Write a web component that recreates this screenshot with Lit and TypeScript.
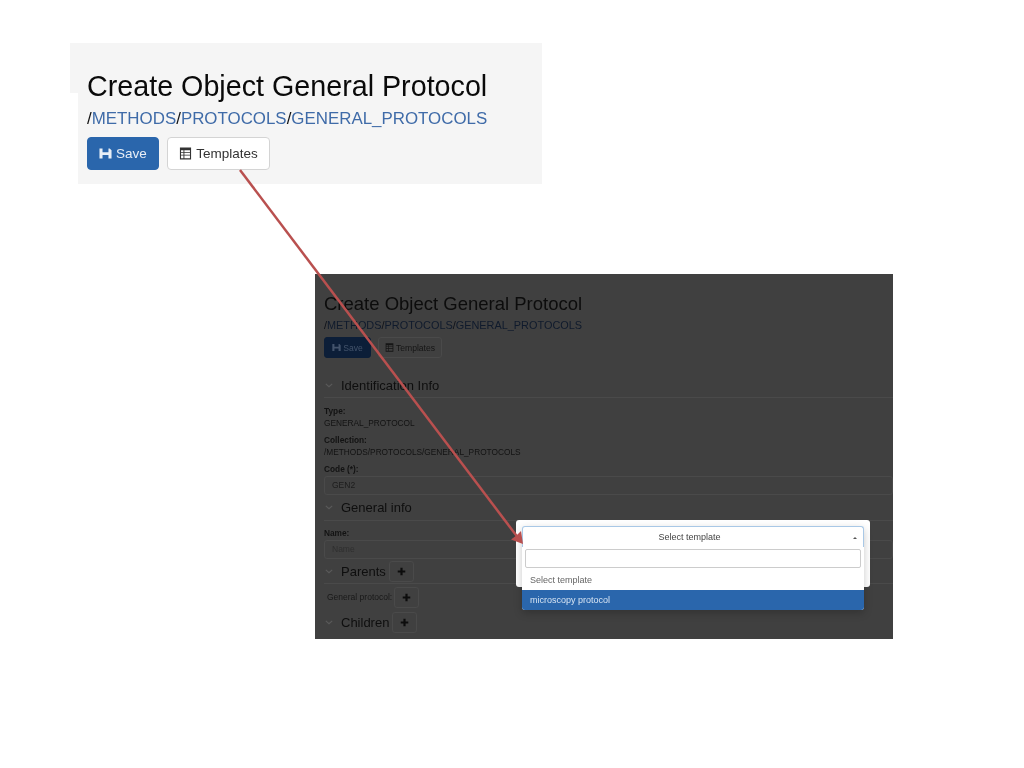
import { LitElement, html, css, svg } from "lit";
import { customElement } from "lit/decorators.js";

const saveIcon = html`<svg class="ico" viewBox="0 0 14 14"><path fill="currentColor" d="M.5 1.500h3.300v4.200h6.400V1.500h1.300l2 2v9h-3.300V8.500H3.800v4H.5z"/></svg>`;
const tableIcon = html`<svg class="ico" viewBox="0 0 14 14"><path fill="currentColor" fill-rule="evenodd" d="M1 .5h12v13H1zM2.200 3.400v2h2.600v-2zm3.600 0v2h6v-2zM2.200 6.300v2h2.600v-2zm3.600 0v2h6v-2zM2.200 9.200v2.900h2.600V9.200zm3.600 0v2.900h6V9.200z"/></svg>`;
const plusIcon = html`<svg class="plus" viewBox="0 0 10 10"><path fill="currentColor" d="M3.800 .8h2.400v3h3v2.400h-3v3H3.800v-3h-3V3.800h3z"/></svg>`;
const chevron = html`<svg class="chev" viewBox="0 0 10 6"><path fill="none" stroke="currentColor" stroke-width="1.400" d="M1 1l4 3.500L9 1"/></svg>`;

const head = (small: boolean) => html`
  <h1>Create Object General Protocol</h1>
  <div class="crumbs">/<a>METHODS</a>/<a>PROTOCOLS</a>/<a>GENERAL_PROTOCOLS</a></div>
  <div class="actions ${small ? "small" : ""}">
    <button class="btn primary">${saveIcon}Save</button>
    <button class="btn">${tableIcon}Templates</button>
  </div>
`;

@customElement("app-root")
export class AppRoot extends LitElement {
  static styles = css`
    :host {
      display: block;
      width: 1024px;
      height: 768px;
      background: #fff;
      position: relative;
      overflow: hidden;
      font-family: "Liberation Sans", Arial, sans-serif;
      color: #111;
    }
    h1 { margin: 0; font-weight: 400; }
    a { color: inherit; }
    button { font-family: inherit; }

    .top {
      position: absolute;
      left: 70px;
      top: 43px;
      width: 472px;
      height: 141px;
      box-sizing: border-box;
      padding: 25px 0 0 17px;
      background: #f5f5f5;
      clip-path: polygon(0 0, 100% 0, 100% 100%, 8px 100%, 8px 50px, 0 50px);
    }
    .top h1, .top .crumbs, .top .actions, .shot > * { filter: blur(0.35px); }
    .top h1 { font-size: 28.700px; line-height: 36px; color: #0a0a0a; white-space: nowrap; }
    .top .crumbs { font-size: 16.900px; line-height: 21px; margin-top: 4px; color: #111; white-space: nowrap; }
    .top .crumbs a { color: #3f6ba8; }
    .actions { display: flex; gap: 8px; margin-top: 8px; }
    .btn {
      display: flex;
      align-items: center;
      justify-content: center;
      gap: 4px;
      height: 33px;
      box-sizing: border-box;
      border-radius: 4px;
      border: 1px solid #d4d4d4;
      background: #fff;
      color: #333;
      font-size: 13.500px;
      padding: 0;
      width: 103px;
    }
    .btn.primary { width: 72px; background: #2a66ac; border-color: #2a66ac; color: #e8eef6; }
    .ico { width: 13px; height: 13px; }

    .shot {
      position: absolute;
      left: 315px;
      top: 274px;
      width: 578px;
      height: 365px;
      box-sizing: border-box;
      padding: 18px 0 0 9px;
      background: #404040;
      color: #0c0c0c;
      overflow: hidden;
    }
    .shot h1 { font-size: 18.500px; line-height: 23px; white-space: nowrap; }
    .shot .crumbs { font-size: 10.900px; line-height: 14px; margin-top: 3px; color: #0c0f16; white-space: nowrap; }
    .shot .crumbs a { color: #0f1a2c; }
    .actions.small { gap: 7px; margin-top: 5px; }
    .actions.small .btn { height: 21px; width: 64px; font-size: 8.600px; border-radius: 3px; border-color: #4a4a4a; background: #404040; color: #151515; gap: 2px; }
    .actions.small .btn.primary { width: 47px; background: #0c1e38; border-color: #0c1e38; color: #43536b; }
    .actions.small .ico { width: 9px; height: 9px; }

    .section {
      display: flex;
      align-items: center;
      gap: 7px;
      box-sizing: border-box;
      border-bottom: 1px solid #4a4a4a;
      font-size: 13px;
      color: #0e0e0e;
    }
    .section.first { margin-top: 16px; height: 24px; }
    .chev { width: 8px; height: 5px; color: #5a5a5a; margin: 0 1px; }
    label { display: block; font-size: 8.300px; font-weight: 700; color: #121212; line-height: 12px; }
    .value { font-size: 8.300px; line-height: 12px; color: #121212; margin-bottom: 5px; }
    .field {
      height: 19px;
      box-sizing: border-box;
      margin-top: 1px;
      border: 1px solid #4a4a4a;
      border-radius: 3px;
      padding-left: 7px;
      font-size: 8.500px;
      line-height: 17px;
      color: #1c1c1c;
    }
    .field.name { color: #2e2e2e; }
    .group { margin-top: 7px; }
    .section.s2 { height: 26px; margin-bottom: 6px; }
    .section.s3 { height: 25px; }
    .section.s4 { height: 24px; border-bottom: none; }
    .sq {
      width: 25px;
      height: 21px;
      box-sizing: border-box;
      border: 1px solid #4a4a4a;
      border-radius: 3px;
      display: flex;
      align-items: center;
      justify-content: center;
      color: #0c0c0c;
      margin-left: -4px;
    }
    .plus { width: 9px; height: 9px; }
    .row { display: flex; align-items: center; gap: 2px; height: 26px; padding-left: 3px; font-size: 8.500px; color: #181818; }
    .row .sq { margin-left: 0; }

    .shot > .card {
      position: absolute;
      left: 201px;
      top: 246px;
      width: 354px;
      height: 67px;
      background: #fff;
      border-radius: 3px;
    }
    .shot > .select {
      position: absolute;
      left: 207px;
      top: 252px;
      width: 342px;
      border-radius: 3px;
      background: #fff;
      box-shadow: 0 3px 8px rgba(0, 0, 0, 0.22);
      font-size: 9px;
      color: #444;
    }
    .current {
      display: flex;
      align-items: center;
      justify-content: center;
      height: 21px;
      box-sizing: border-box;
      padding-right: 7px;
      border: 1px solid #a9c8e6;
      border-bottom: none;
      border-radius: 3px 3px 0 0;
      position: relative;
    }
    .caret {
      position: absolute;
      right: 6px;
      top: 10px;
      border-left: 2px solid transparent;
      border-right: 2px solid transparent;
      border-bottom: 2px solid #555;
    }
    .search-wrap { padding: 2px 3px 0; }
    .search {
      height: 19px;
      box-sizing: border-box;
      border: 1px solid #ccc;
      border-radius: 2px;
    }
    .opt { height: 22px; box-sizing: border-box; padding: 1px 0 0 8px; display: flex; align-items: center; color: #666; }
    .opt.on { height: 20px; padding-top: 0; background: #2a66ac; color: #d7e4f3; border-radius: 0 0 3px 3px; }

    .arrow { position: absolute; inset: 0; width: 1024px; height: 768px; pointer-events: none; }
  `;

  render() {
    return html`
      <div class="top">${head(false)}</div>

      <div class="shot">
        ${head(true)}
        <div class="section first">${chevron}Identification Info</div>
        <div class="group">
          <label>Type:</label>
          <div class="value">GENERAL_PROTOCOL</div>
          <label>Collection:</label>
          <div class="value">/METHODS/PROTOCOLS/GENERAL_PROTOCOLS</div>
          <label>Code (*):</label>
          <div class="field">GEN2</div>
        </div>
        <div class="section s2">${chevron}General info</div>
        <label>Name:</label>
        <div class="field name">Name</div>
        <div class="section s3">${chevron}Parents <span class="sq">${plusIcon}</span></div>
        <div class="row">General protocol: <span class="sq">${plusIcon}</span></div>
        <div class="section s4">${chevron}Children <span class="sq">${plusIcon}</span></div>

        <div class="card"></div>
        <div class="select">
          <div class="current">Select template<span class="caret"></span></div>
          <div class="search-wrap"><div class="search"></div></div>
          <div class="opt">Select template</div>
          <div class="opt on">microscopy protocol</div>
        </div>
      </div>

      <svg class="arrow" viewBox="0 0 1024 768">
        ${svg`<line x1="240" y1="170" x2="519" y2="539" stroke="#b9504f" stroke-width="2.500"/>
        <path d="M523 544L511 539.500L517 535L521 531Z" fill="#b9504f"/>`}
      </svg>
    `;
  }
}
